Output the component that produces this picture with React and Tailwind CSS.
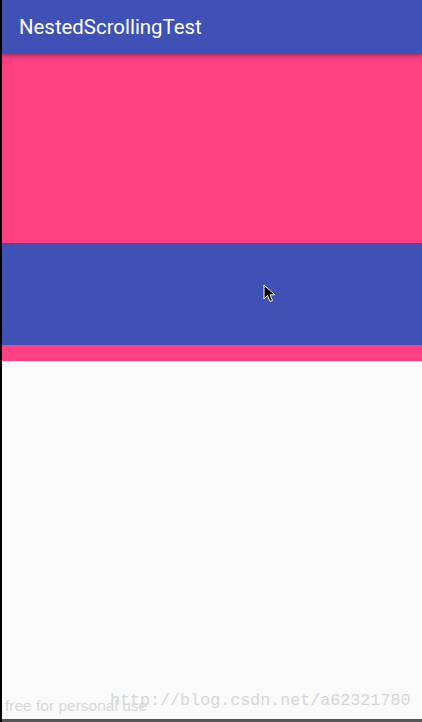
export default function App() {
  return (
    <div className="flex h-[722px] w-[422px] overflow-hidden bg-black">
      <div className="w-[2px] shrink-0 bg-black" />
      <div className="flex flex-1 flex-col">
        <div className="relative flex flex-1 flex-col bg-[#fafafa]">
          <div className="relative z-10 flex h-[54px] items-center bg-[#3f51b5] pl-[17px] shadow-[0_2px_4px_rgba(0,0,0,0.35)]">
            <span className="text-[20.4px] text-white" style={{ fontFamily: 'Roboto, sans-serif' }}>
              NestedScrollingTest
            </span>
          </div>
          <div className="h-[189px] bg-[#ff4081]" />
          <div className="relative h-[102px] bg-[#3f51b5]">
            <svg className="absolute left-[261px] top-[41px]" width="13" height="19" viewBox="0 0 13 19">
              <path d="M1 1 L1 15 L4.5 11.5 L7 17.5 L9.5 16.5 L7 10.8 L11.8 10.8 Z" fill="#000" stroke="#fff" strokeWidth="1" strokeLinejoin="round" />
            </svg>
          </div>
          <div className="h-[16px] bg-[#ff4081]" />
          <div className="flex-1" />
          <div className="relative h-[39px]">
            <span
              className="absolute left-[3px] top-[14px] text-[15.5px] text-[#d8d8d8]"
              style={{ fontFamily: '"Liberation Sans", sans-serif' }}
            >
              free for personal use
            </span>
            <span
              className="absolute left-[108px] top-[8px] text-[16.7px] text-[#d6d6d6]"
              style={{ fontFamily: '"Liberation Mono", monospace' }}
            >
              http://blog.csdn.net/a62321780
            </span>
          </div>
        </div>
        <div className="h-[3px] bg-[#555]" />
      </div>
    </div>
  )
}
